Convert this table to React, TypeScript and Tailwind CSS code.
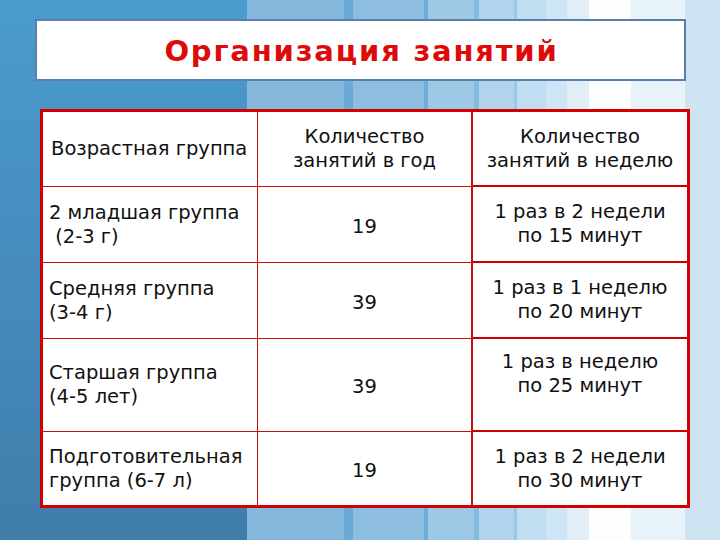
const rows = [
  { group: ["2 младшая группа", "\u00a0(2-3 г)"], year: "19", week: ["1 раз в 2 недели", "по 15 минут"] },
  { group: ["Средняя группа", "(3-4 г)"], year: "39", week: ["1 раз в 1 неделю", "по 20 минут"] },
  { group: ["Старшая группа", "(4-5 лет)"], year: "39", week: ["1 раз в неделю", "по 25 минут"], top: true },
  { group: ["Подготовительная", "группа (6-7 л)"], year: "19", week: ["1 раз в 2 недели", "по 30 минут"] },
];

const heights = ["h-[76px]", "h-[76px]", "h-[93px]", "h-[73px]"];

export default function App() {
  return (
    <div
      className="relative w-[720px] h-[540px] overflow-hidden bg-no-repeat bg-[image:linear-gradient(to_bottom,#4b9bce,#3f7dab),linear-gradient(to_right,#85b8dc_0_97px,#6aaad6_97px_106px,#8dbde0_106px_177px,#70acd8_177px_181px,#9ec9e6_181px_227px,#86bbe0_227px_232px,#b0d4ec_232px_267px,#9cc8e6_267px_270px,#c1ddf1_270px_299px,#cde5f5_299px_320px,#e2eef7_320px_342px,#fcfdff_342px_384px,#e8f2f9_384px_438px,#cfe4f2_438px)] bg-[size:247px_100%,473px_100%] bg-[position:0_0,247px_0]"
      style={{ fontFamily: '"DejaVu Sans", Verdana, sans-serif' }}
    >
      <div className="ml-[35px] mt-[19px] w-[651px] h-[62px] bg-white border-2 border-[#5b7fa8] flex items-center justify-center">
        <h1 className="text-[29px] font-bold text-[#df0a0a] tracking-[1.8px] leading-none pt-[3px] pl-[2px]">
          Организация занятий
        </h1>
      </div>

      <div className="ml-[40px] mt-[28px] w-[650px] bg-white border-[3px] border-[#d40000] grid grid-cols-[215px_215px_214px] text-[19.5px] leading-[24px] text-[#111]">
        <div className="h-[75px] border-r border-b border-[#c41010] flex items-center pl-[8px]">
          Возрастная группа
        </div>
        <div className="h-[75px] border-r-2 border-b border-[#c41010] flex flex-col items-center justify-center">
          <span>Количество</span>
          <span>занятий в год</span>
        </div>
        <div className="h-[75px] border-b-2 border-[#d00000] flex flex-col items-center justify-center">
          <span>Количество</span>
          <span>занятий в неделю</span>
        </div>

        {rows.map((r, i) => {
          const last = i === rows.length - 1;
          return [
            <div
              key={`g${i}`}
              className={`${heights[i]} border-r border-[#c41010] ${last ? "" : "border-b"} flex flex-col justify-center pl-[6px]`}
            >
              {r.group.map((t) => (
                <span key={t} className="whitespace-pre">{t}</span>
              ))}
            </div>,
            <div
              key={`y${i}`}
              className={`${heights[i]} border-r-2 border-[#c41010] ${last ? "" : "border-b"} flex items-center justify-center pt-[4px]`}
            >
              {r.year}
            </div>,
            <div
              key={`w${i}`}
              className={`${heights[i]} border-[#d00000] ${last ? "" : "border-b-2"} flex flex-col items-center justify-center ${r.top ? "pb-[22px]" : ""}`}
            >
              {r.week.map((t) => (
                <span key={t}>{t}</span>
              ))}
            </div>,
          ];
        })}
      </div>
    </div>
  );
}
